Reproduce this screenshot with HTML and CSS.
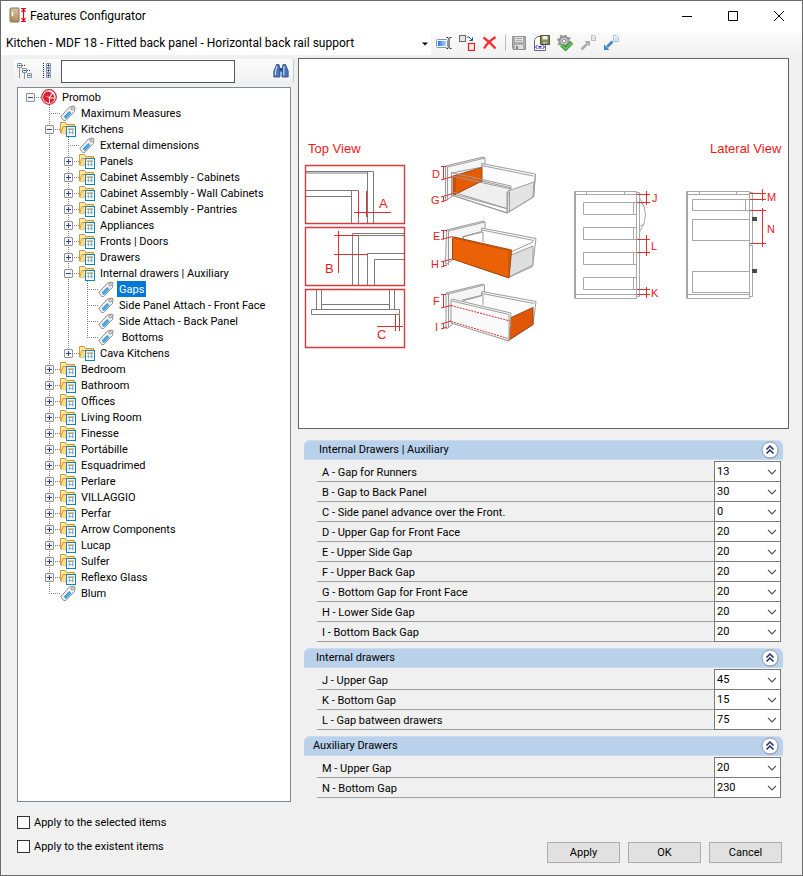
FILE: index.html
```html
<!DOCTYPE html>
<html lang="en">
<head>
<meta charset="utf-8">
<title>Features Configurator</title>
<link rel="stylesheet" href="styles.css">
</head>
<body>
<svg class="defs" aria-hidden="true">
  <defs>
    <linearGradient id="gold" x1="0" y1="0" x2="1" y2="1"><stop offset="0" stop-color="#fff3b4"/><stop offset="1" stop-color="#f3c553"/></linearGradient>
    <linearGradient id="blue" x1="0" y1="0" x2="1" y2="0"><stop offset="0" stop-color="#2f74dc"/><stop offset="1" stop-color="#b4d2fa"/></linearGradient>
    <linearGradient id="wood" x1="0" y1="0" x2="0" y2="1"><stop offset="0" stop-color="#dcc5a2"/><stop offset="1" stop-color="#ad8958"/></linearGradient>
  </defs>
  <symbol id="folder" viewBox="0 0 16 16">
    <path d="M.5 12V1.500H5.500L6.500 3.500H14.500V12z" fill="url(#gold)" stroke="#d4973c"/>
    <path d="M.8 12.200L3 5.500H15" fill="none" stroke="#d4973c"/>
    <path d="M1.500 12l2-5.500H8V12z" fill="#ffe083"/>
    <rect x="6.500" y="5.500" width="9" height="10" fill="#fff" stroke="#1481c2"/>
    <path d="M8 8.500h6M8 11.500h6M9.500 7.500v6M12.500 7.500v6" stroke="#83b6e2" fill="none"/>
    <path d="M8 7.500h6" stroke="#f1c04e"/>
  </symbol>
  <symbol id="tag" viewBox="0 0 16 16">
    <path d="M.8 11.500L9.500 2l4.500-1 1 1-.5 4.500-8.700 9-2 .2z" fill="#f0f0f0" stroke="#8c8c8c"/>
    <path d="M4.200 11.800l5-5.300 1.800 1.800-5 5.200z" fill="#48aee8" stroke="#167fc1" stroke-width=".8"/>
    <circle cx="12.200" cy="3.800" r="1.200" fill="#fff" stroke="#777" stroke-width=".8"/>
  </symbol>
  <symbol id="up" viewBox="0 0 18 18">
    <circle cx="9.500" cy="10" r="8" fill="#7d8da6" opacity=".5"/>
    <circle cx="9" cy="9" r="8" fill="#fff" stroke="#8e99b3"/>
    <path d="M5.500 8.500L9 5l3.500 3.500M5.500 12.500L9 9l3.500 3.500" fill="none" stroke="#1e2d6b" stroke-width="1.500"/>
  </symbol>
  <symbol id="down" viewBox="0 0 10 6"><path d="M1 .8L5 4.800 9 .8" fill="none" stroke="#505050" stroke-width="1.200"/></symbol>
</svg>

<div class="window">
  <header class="titlebar">
    <svg class="app-icon" viewBox="0 0 18 18" aria-hidden="true">
      <rect x="1" y="1" width="9" height="14" rx="1" fill="url(#wood)" stroke="#8a7048"/>
      <path d="M3.500 5v4" stroke="#fff" stroke-width="1.500"/>
      <path d="M12 1.500h5M12 14.500h5M14.500 2v12M12.500 5l2-3 2 3M12.500 11l2 3 2-3" fill="none" stroke="#e2001a" stroke-width="1.200"/>
    </svg>
    <h1>Features Configurator</h1>
    <div class="caption-buttons">
      <button type="button" aria-label="Minimize"><svg viewBox="0 0 12 12"><path d="M1 6.500h10"/></svg></button>
      <button type="button" aria-label="Maximize"><svg viewBox="0 0 12 12"><path d="M1.500 1.500h9v9h-9z"/></svg></button>
      <button type="button" aria-label="Close"><svg viewBox="0 0 12 12"><path d="M1 1l10 10M11 1L1 11"/></svg></button>
    </div>
  </header>

  <div class="toolbar">
    <div class="model">
      <select aria-label="Model"><option>Kitchen - MDF 18 - Fitted back panel - Horizontal back rail support</option></select>
      <svg class="model-arrow" viewBox="0 0 6 4" aria-hidden="true"><path d="M0 .5h6L3 3.500z"/></svg>
    </div>
    <div class="tools">
      <button type="button" aria-label="Rename"><svg viewBox="0 0 16 16"><rect x=".5" y="4.500" width="11" height="8" rx="1" fill="#fff" stroke="#8295b5"/><rect x="2" y="6" width="8" height="5" fill="url(#blue)"/><path d="M10.500 2.500h1.500l1 1 1-1H15.500M13 3.500v9M10.500 13.500H12l1-1 1 1h1.500" fill="none" stroke="#222"/></svg></button>
      <button type="button" aria-label="Replace"><svg viewBox="0 0 16 16"><rect x=".5" y=".5" width="6" height="6" fill="#e5e5e5" stroke="#706868"/><path d="M8 2h2l3 3M13.500 2.500v3h-3" fill="none" stroke="#24489b"/><rect x="9.500" y="8.500" width="6" height="7" fill="#eee" stroke="#f01818" stroke-width="1.200"/></svg></button>
      <button type="button" aria-label="Delete"><svg viewBox="0 0 16 16"><path d="M1.500 2.500C5 5 10 9 13.500 13.500M13.500 2C9 5 4.500 9 2 13.500" fill="none" stroke="#f42d2d" stroke-width="2.200"/></svg></button>
      <span class="separator"></span>
      <button type="button" aria-label="Save"><svg viewBox="0 0 16 16"><path d="M1.500 1.500h13v13h-12l-1-1z" fill="#aaa" stroke="#929292"/><path d="M4 2h8v5H4z" fill="#e2e2e2"/><path d="M5 3.500h6M5 5.500h6" stroke="#aaa"/><path d="M4 10h8v4H4z" fill="#ddd"/><path d="M6 11v3" stroke="#888" stroke-width="2"/></svg></button>
      <button type="button" aria-label="Save as code"><svg viewBox="0 0 16 16"><path d="M.5 4.500L3.500 1.500h8v14H.5z" fill="#fff" stroke="#666"/><path d="M6.500.5h9v9h-9z" fill="#8b8650" stroke="#55522f"/><path d="M8.500 1h5v3.500h-5z" fill="#eee"/><path d="M9 6.500h4V9H9z" fill="#aaa"/><path d="M3.500 10L1.500 12l2 2M8.500 10l2 2-2 2M4.500 11.500h3M4.500 13h3" fill="none" stroke="#1717ee"/></svg></button>
      <button type="button" aria-label="Validate"><svg viewBox="0 0 16 16"><circle cx="7" cy="6" r="4.500" fill="#ccc" stroke="#929292" stroke-width="2"/><circle cx="7" cy="6" r="6" fill="none" stroke="#929292" stroke-width="2" stroke-dasharray="2 2.700"/><circle cx="7" cy="6" r="1.800" fill="#fff" stroke="#929292"/><path d="M4.500 10l4 4L15 7.500" fill="none" stroke="#28822b" stroke-width="3.500"/><path d="M4.500 10l4 4L15 7.500" fill="none" stroke="#60cf57" stroke-width="1.800"/></svg></button>
      <button type="button" aria-label="Export"><svg viewBox="0 0 16 16"><path d="M11.500.5h2.500l1.500 1.500v3.500h-4z" fill="#eee" stroke="#bbb"/><path d="M12.500 3.500h2" stroke="#bbb" stroke-width=".7"/><path d="M1.500 14.500L7 9" stroke="#aaa" stroke-width="2.600"/><path d="M4.500 6H10v5.500z" fill="#aaa"/></svg></button>
      <button type="button" aria-label="Import"><svg viewBox="0 0 16 16"><path d="M10.500.5h3l2 2v4h-5z" fill="#eef5ff" stroke="#a7bfdf"/><path d="M12 3.500h2M12 5h2" stroke="#8eafda" stroke-width=".7"/><path d="M4 12l5.500-5.500" stroke="#3c86cf" stroke-width="2.600"/><path d="M1 9.500V15h5.500z" fill="#3c86cf"/></svg></button>
    </div>
  </div>

  <main class="main">
    <section class="left">
      <div class="search">
        <button type="button" aria-label="Collapse all"><svg viewBox="0 0 16 16"><g fill="#fff" stroke="#7793b8"><path d="M.5.5h4v4h-4zM5.500 5.500h4v4h-4zM10.500 10.500h4v4h-4z"/></g><path d="M1.500 2.500h2M6.500 7.500h2M11.500 12.500h2" stroke="#333"/><path d="M2.500 5.500v10M5 2.500h4M7.500 10.500v5M10 7.500h4" stroke="#333" stroke-dasharray="1 1"/></svg></button>
        <button type="button" aria-label="Expand all"><svg viewBox="0 0 16 16"><g fill="#fff" stroke="#7793b8"><path d="M7.500.5h4v4h-4zM7.500 5.500h4v4h-4zM7.500 10.500h4v4h-4z"/></g><path d="M8.500 2.500h2M8.500 7.500h2M8.500 12.500h2M9.500 1.500v2M9.500 6.500v2M9.500 11.500v2" stroke="#111"/><path d="M4.500 0v16" stroke="#222" stroke-dasharray="1 1"/></svg></button>
        <input type="text" aria-label="Search features">
        <button type="button" class="find" aria-label="Find"><svg viewBox="0 0 16 16"><path d="M3.500 1.500h2.500l1 4.500v8H.800V8zM10 1.500h2.500L15.200 8v6H9V6z" fill="#4a72b5" stroke="#2b4d8c" stroke-width=".8"/><path d="M4 3L2.500 8.500v4M11 3l-.2 5.500v4" fill="none" stroke="#c4d8f4" stroke-width="1.200"/><path d="M6.500 5h3v3.500h-3z" fill="#2b4d8c"/></svg></button>
      </div>

      <nav class="tree" aria-label="Features">
        <ul>
          <li><div class="row"><button type="button" class="exp open" aria-label="Collapse"></button><svg viewBox="0 0 16 16"><circle cx="8" cy="8" r="7.300" fill="#fff" stroke="#d32735" stroke-width="1.200"/><path d="M7.500 2.500a5.600 5.600 0 0 0-2.500 10.500l3 1V9L4 6.500l4 1.500 3-4zM12 4.500L9 8.500h4.500zM9 9.500V14c2.500-.5 4.300-2.200 4.500-4.500z" fill="#dc1f31"/></svg><span>Promob</span></div>
            <ul>
              <li><div class="row leaf"><i></i><svg><use href="#tag"/></svg><span>Maximum Measures</span></div></li>
              <li><div class="row"><button type="button" class="exp open" aria-label="Collapse"></button><svg><use href="#folder"/></svg><span>Kitchens</span></div>
                <ul>
                  <li><div class="row leaf"><i></i><svg><use href="#tag"/></svg><span>External dimensions</span></div></li>
                  <li><div class="row"><button type="button" class="exp" aria-label="Expand"></button><svg><use href="#folder"/></svg><span>Panels</span></div></li>
                  <li><div class="row"><button type="button" class="exp" aria-label="Expand"></button><svg><use href="#folder"/></svg><span>Cabinet Assembly - Cabinets</span></div></li>
                  <li><div class="row"><button type="button" class="exp" aria-label="Expand"></button><svg><use href="#folder"/></svg><span>Cabinet Assembly - Wall Cabinets</span></div></li>
                  <li><div class="row"><button type="button" class="exp" aria-label="Expand"></button><svg><use href="#folder"/></svg><span>Cabinet Assembly - Pantries</span></div></li>
                  <li><div class="row"><button type="button" class="exp" aria-label="Expand"></button><svg><use href="#folder"/></svg><span>Appliances</span></div></li>
                  <li><div class="row"><button type="button" class="exp" aria-label="Expand"></button><svg><use href="#folder"/></svg><span>Fronts | Doors</span></div></li>
                  <li><div class="row"><button type="button" class="exp" aria-label="Expand"></button><svg><use href="#folder"/></svg><span>Drawers</span></div></li>
                  <li><div class="row"><button type="button" class="exp open" aria-label="Collapse"></button><svg><use href="#folder"/></svg><span>Internal drawers | Auxiliary</span></div>
                    <ul>
                      <li><div class="row leaf"><i></i><svg><use href="#tag"/></svg><span class="selected">Gaps</span></div></li>
                      <li><div class="row leaf"><i></i><svg><use href="#tag"/></svg><span>Side Panel Attach - Front Face</span></div></li>
                      <li><div class="row leaf"><i></i><svg><use href="#tag"/></svg><span>Side Attach - Back Panel</span></div></li>
                      <li><div class="row leaf"><i></i><svg><use href="#tag"/></svg><span>&nbsp;Bottoms</span></div></li>
                    </ul>
                  </li>
                  <li><div class="row"><button type="button" class="exp" aria-label="Expand"></button><svg><use href="#folder"/></svg><span>Cava Kitchens</span></div></li>
                </ul>
              </li>
              <li><div class="row"><button type="button" class="exp" aria-label="Expand"></button><svg><use href="#folder"/></svg><span>Bedroom</span></div></li>
              <li><div class="row"><button type="button" class="exp" aria-label="Expand"></button><svg><use href="#folder"/></svg><span>Bathroom</span></div></li>
              <li><div class="row"><button type="button" class="exp" aria-label="Expand"></button><svg><use href="#folder"/></svg><span>Offices</span></div></li>
              <li><div class="row"><button type="button" class="exp" aria-label="Expand"></button><svg><use href="#folder"/></svg><span>Living Room</span></div></li>
              <li><div class="row"><button type="button" class="exp" aria-label="Expand"></button><svg><use href="#folder"/></svg><span>Finesse</span></div></li>
              <li><div class="row"><button type="button" class="exp" aria-label="Expand"></button><svg><use href="#folder"/></svg><span>Portábille</span></div></li>
              <li><div class="row"><button type="button" class="exp" aria-label="Expand"></button><svg><use href="#folder"/></svg><span>Esquadrimed</span></div></li>
              <li><div class="row"><button type="button" class="exp" aria-label="Expand"></button><svg><use href="#folder"/></svg><span>Perlare</span></div></li>
              <li><div class="row"><button type="button" class="exp" aria-label="Expand"></button><svg><use href="#folder"/></svg><span>VILLAGGIO</span></div></li>
              <li><div class="row"><button type="button" class="exp" aria-label="Expand"></button><svg><use href="#folder"/></svg><span>Perfar</span></div></li>
              <li><div class="row"><button type="button" class="exp" aria-label="Expand"></button><svg><use href="#folder"/></svg><span>Arrow Components</span></div></li>
              <li><div class="row"><button type="button" class="exp" aria-label="Expand"></button><svg><use href="#folder"/></svg><span>Lucap</span></div></li>
              <li><div class="row"><button type="button" class="exp" aria-label="Expand"></button><svg><use href="#folder"/></svg><span>Sulfer</span></div></li>
              <li><div class="row"><button type="button" class="exp" aria-label="Expand"></button><svg><use href="#folder"/></svg><span>Reflexo Glass</span></div></li>
              <li><div class="row leaf"><i></i><svg><use href="#tag"/></svg><span>Blum</span></div></li>
            </ul>
          </li>
        </ul>
      </nav>
    </section>

    <section class="right">
      <div class="preview">
        <svg class="diagram" viewBox="299 59 489 369" role="img" aria-label="Drawer gap diagram">
          <g class="title"><text x="308" y="153">Top View</text><text x="710" y="153">Lateral View</text></g>

          <!-- top views -->
          <g class="ink">
            <path d="M306 171.500h67.500V223M306 173h61M367.500 171v52M306 190.500h52.500V223M306 196.500h46M351.500 190.500V223"/>
            <path d="M352.500 285v-51.500H404M358.500 235.500V285M352.500 235.500H404M367.500 285v-31.500H404M374.500 285v-25.500H404"/>
            <path d="M316.500 290v19M321.500 290v19M389.500 290v19M394.500 290v19M321.500 304.500h68M311.500 309.500h88v5h-88z"/>
          </g>
          <g class="frame"><path d="M305.500 165.500h99v58h-99zM305.500 227.500h99v58h-99zM305.500 289.500h99v58h-99z"/></g>
          <g class="mark"><path d="M358.500 191v26M366.500 191v26M354 212.500h37M334 235.500h24M334 254.500h34M338.500 231v42M395.500 315v16M399.500 315v16M377 326.500h26"/></g>
          <g class="big"><text x="379" y="208">A</text><text x="325" y="273">B</text><text x="377" y="339">C</text></g>

          <!-- drawer with highlighted side -->
          <g class="solid">
            <path d="M445.500 166L483 157l2 1v14l-38 28h-1.500z" fill="#f5f5f5"/>
            <path d="M445.500 166l2 1 37.500-9M447.500 167v33"/>
            <path d="M481.500 163.500l54 10.500-2 23-26 16-56-18v-22l31-6z" fill="#fcfcfc"/>
            <path d="M453 194l29-13 28 6.500v22z" fill="#efefef"/>
            <path d="M481.500 165.500l52 10.500"/>
            <path d="M453 176l29-8.500V181l-27 13.500-2-.5z" fill="#e65c05" stroke="#a54510"/>
            <path d="M455 175.500v19" stroke="#a54510"/>
            <path d="M451 172.500l60 13.500v3L452 176M453 192l55 17M451 195l56 18"/>
            <path d="M508 191l26-9-1 15-26 16z" fill="#e4e4e4"/>
            <path d="M507 192h2.500v20M507 192v21M535.500 174l-2 23"/>
          </g>
          <!-- drawer with highlighted front -->
          <g class="solid">
            <path d="M446.500 230l37-9 1.500 1v14l-38 28h-1.500z" fill="#f5f5f5"/>
            <path d="M446 231h2l37-9M448.500 231v34"/>
            <path d="M481.500 228l54.500 10.500-3.500 28-24 11-45-15v-26l18-5z" fill="#fcfcfc"/>
            <path d="M482 230l52 10.500M462 237l21-5v10"/>
            <path d="M511 255l22-9v19l-24 12z" fill="#dedede"/>
            <path d="M511 252l22-10"/>
            <path d="M452.500 238l1.500-1 57.500 13-2.500 28-56.500-19z" fill="#ea6205" stroke="#9b4815"/>
            <path d="M454 238l55 12.500v26" stroke="#bd500b"/>
          </g>
          <!-- drawer with highlighted back -->
          <g class="solid">
            <path d="M446 293l37-9 1.500 1v14l-38 30H446z" fill="#f5f5f5"/>
            <path d="M446 294h2l36-9M448.500 294v34"/>
            <path d="M482 291.500l54 10-3 23-25 16.500-45-16v-24l18-5z" fill="#fcfcfc"/>
            <path d="M482 293.500l52 10M462 300l21-5v10"/>
            <path d="M510 318l23-10.500v17L509 340z" fill="#de5606" stroke="#9b4815"/>
            <path d="M451 300l1-1 59 14-2 28-58-18z" fill="#fafafa"/>
            <path d="M452 301l57 13.500v26"/>
          </g>
          <path class="dots" d="M451 305.500l59 15.500M451 321.500l57 17"/>
          <g class="mark">
            <path d="M443.500 166v14M441 166.500h5M441 180l12-3.500M443.500 196v6M441 197l12-3.500M441 202l6-2"/>
            <path d="M443.500 230.500v9M441 230.500h6M441 239.500l12-3M443.500 261v6M441 262l11-3M441 267l6-2"/>
            <path d="M443.500 294v14M441 294.500h5M441 308l10-2.500M443.500 323v6M441 324l10-3M441 329l6-2"/>
          </g>
          <g class="small"><text x="432" y="178">D</text><text x="431" y="204">G</text><text x="433" y="240">E</text><text x="431" y="268">H</text><text x="433" y="305">F</text><text x="435" y="331">I</text></g>

          <!-- cabinets seen from the side -->
          <g class="thin">
            <path d="M574.500 191.500h62v107h-62zM575.500 192v106M574.500 194.500h62M586.500 191.500v3M624.500 191.500v3M574.500 294.500h62M636.500 192.500h3v104h-3z"/>
            <path d="M583.500 202.500h53v12h-53zM583.500 227.500h53v12h-53zM583.500 252.500h53v12h-53zM583.500 277.500h53v12h-53zM633.500 202.500v12M633.500 227.500v12M633.500 252.500v12M633.500 277.500v12"/>
            <path d="M639.500 198q6 8 6 17t-6 17M639.500 202q3 1 5 5M639.500 226q2 0 4-2"/>
            <path d="M686.500 191.500h63v107h-63zM687.500 192v106M686.500 194.500h63M699.500 191.500v3M736.500 191.500v3M686.500 294.500h63M749.500 192.500h3v51h-3zM749.500 245.500h3v51h-3z"/>
            <path d="M692.500 199.500h57v11h-57zM745.500 199.500v11M692.500 219.500h57v21h-57zM692.500 271.500h57v21h-57z"/>
          </g>
          <path d="M752 217h5v4h-5zM752 269h5v4h-5z" fill="#4a4a4a"/>
          <g class="mark">
            <path d="M637 194.500h13M637 202.500h13M646.500 191v14M637 239.500h13M637 252.500h13M646.500 235v21M637 289.500h13M637 294.500h13M646.500 287v11"/>
            <path d="M750 193.500h16M750 199.500h16M762.500 189v12M750 210.500h16M750 243.500h16M762.500 208v39"/>
          </g>
          <g class="small"><text x="652" y="202">J</text><text x="651" y="250">L</text><text x="651" y="297">K</text><text x="767" y="201">M</text><text x="767" y="233">N</text></g>
        </svg>
      </div>

      <div class="groups">
        <section class="group">
          <header class="wide"><h2>Internal Drawers | Auxiliary</h2><button type="button" aria-label="Collapse group"><svg><use href="#up"/></svg></button></header>
          <div class="fields">
            <div class="field"><label for="fa">A - Gap for Runners</label><div class="combo"><select id="fa"><option>13</option></select><svg><use href="#down"/></svg></div></div>
            <div class="field"><label for="fb">B - Gap to Back Panel</label><div class="combo"><select id="fb"><option>30</option></select><svg><use href="#down"/></svg></div></div>
            <div class="field"><label for="fc">C - Side panel advance over the Front.</label><div class="combo"><select id="fc"><option>0</option></select><svg><use href="#down"/></svg></div></div>
            <div class="field"><label for="fd">D - Upper Gap for Front Face</label><div class="combo"><select id="fd"><option>20</option></select><svg><use href="#down"/></svg></div></div>
            <div class="field"><label for="fe">E - Upper Side Gap</label><div class="combo"><select id="fe"><option>20</option></select><svg><use href="#down"/></svg></div></div>
            <div class="field"><label for="ff">F - Upper Back Gap</label><div class="combo"><select id="ff"><option>20</option></select><svg><use href="#down"/></svg></div></div>
            <div class="field"><label for="fg">G - Bottom Gap for Front Face</label><div class="combo"><select id="fg"><option>20</option></select><svg><use href="#down"/></svg></div></div>
            <div class="field"><label for="fh">H - Lower Side Gap</label><div class="combo"><select id="fh"><option>20</option></select><svg><use href="#down"/></svg></div></div>
            <div class="field"><label for="fi">I - Bottom Back Gap</label><div class="combo"><select id="fi"><option>20</option></select><svg><use href="#down"/></svg></div></div>
          </div>
        </section>
        <section class="group">
          <header class="medium"><h2>Internal drawers</h2><button type="button" aria-label="Collapse group"><svg><use href="#up"/></svg></button></header>
          <div class="fields">
            <div class="field"><label for="fj">J - Upper Gap</label><div class="combo"><select id="fj"><option>45</option></select><svg><use href="#down"/></svg></div></div>
            <div class="field"><label for="fk">K - Bottom Gap</label><div class="combo"><select id="fk"><option>15</option></select><svg><use href="#down"/></svg></div></div>
            <div class="field"><label for="fl">L - Gap batween drawers</label><div class="combo"><select id="fl"><option>75</option></select><svg><use href="#down"/></svg></div></div>
          </div>
        </section>
        <section class="group">
          <header><h2>Auxiliary Drawers</h2><button type="button" aria-label="Collapse group"><svg><use href="#up"/></svg></button></header>
          <div class="fields">
            <div class="field"><label for="fm">M - Upper Gap</label><div class="combo"><select id="fm"><option>20</option></select><svg><use href="#down"/></svg></div></div>
            <div class="field"><label for="fn">N - Bottom Gap</label><div class="combo"><select id="fn"><option>230</option></select><svg><use href="#down"/></svg></div></div>
          </div>
        </section>
      </div>
    </section>
  </main>

  <footer class="footer">
    <div class="checks">
      <label><input type="checkbox">Apply to the selected items</label>
      <label><input type="checkbox">Apply to the existent items</label>
    </div>
    <div class="actions">
      <button type="button">Apply</button>
      <button type="button">OK</button>
      <button type="button">Cancel</button>
    </div>
  </footer>
</div>
</body>
</html>
```
FILE: styles.css
```css
* { box-sizing: border-box; }

body {
  margin: 0;
  background: #f0f0f0;
  color: #000;
  font: 11px/16px Roboto, "Liberation Sans", sans-serif;
}

button, input, select { font: inherit; color: inherit; margin: 0; padding: 0; border: 0; border-radius: 0; background: none; }
svg { display: block; flex: none; }
ul { list-style: none; margin: 0; padding: 0; }
h1, h2 { margin: 0; font-size: inherit; font-weight: normal; }
.defs { position: absolute; width: 0; height: 0; }

.window {
  display: flex;
  flex-direction: column;
  min-height: 100vh;
  border: 1px solid #6a6a6a;
}

/* title bar */
.titlebar { display: flex; align-items: center; height: 30px; padding-left: 8px; background: #fff; }
.app-icon { width: 18px; height: 18px; margin-right: 3px; }
.titlebar h1 { flex: 1; font-size: 12px; }
.caption-buttons { display: flex; }
.caption-buttons button { width: 46px; height: 30px; display: grid; place-items: center; }
.caption-buttons svg { width: 12px; height: 12px; fill: none; stroke: #000; }

/* toolbar */
.toolbar { display: flex; height: 27px; background: linear-gradient(#fcfcfc, #f0f0f0); }
.model { position: relative; flex: 0 1 431px; height: 24px; background: #fff; border-right: 1px solid #f6f6f6; }
.model select { appearance: none; width: 100%; height: 25px; padding-left: 5px; font-size: 12px; line-height: 25px; }
.model-arrow { position: absolute; right: 3px; top: 11px; width: 6px; height: 4px; }
.tools { display: flex; align-items: center; height: 24px; }
.tools button { display: grid; place-items: center; width: 23px; height: 22px; }
.tools svg { width: 16px; height: 16px; }
.separator { width: 1px; height: 16px; margin: 0 1px 0 4px; background: #bdbdbd; }

/* two columns */
.main { flex: 1; display: grid; grid-template-columns: minmax(200px, 274px) minmax(0, 1fr); column-gap: 7px; padding: 0 13px 0 16px; }
.left { display: flex; flex-direction: column; gap: 4px; padding-top: 1px; }
.search { display: flex; align-items: center; height: 24px; margin: 0 -3px; padding: 0 4px 0 3px; border-right: 1px solid #c8c8c8; border-radius: 3px; background: linear-gradient(#fcfcfc, #f0f0f0); }
.search svg { width: 16px; height: 16px; }
.search button + button { margin-left: 6px; }
.search input { flex: 0 1 174px; min-width: 0; height: 23px; margin-left: 6px; padding: 0 4px; border: 1px solid #555; background: #fff; }
.search .find { margin-left: auto; }

/* tree */
.tree { flex: 1; padding: 1px 0 1px 3px; border: 1px solid #828790; background: #fff; }
.tree ul ul { padding-left: 19px; }
.tree li { position: relative; }
.tree ul ul > li::before {
  content: "";
  position: absolute;
  left: 9px;
  top: 0;
  bottom: 0;
  width: 1px;
  background: repeating-linear-gradient(#808080 0 1px, transparent 1px 2px);
}
.tree ul ul > li:last-child::before { bottom: auto; height: 9px; }
.row { position: relative; display: flex; align-items: center; height: 16px; white-space: nowrap; }
.row::before {
  content: "";
  position: absolute;
  left: 9px;
  top: 8px;
  width: 11px;
  height: 1px;
  background: repeating-linear-gradient(90deg, #808080 0 1px, transparent 1px 2px);
}
.row > i { width: 19px; }
.row > svg { position: relative; width: 16px; height: 16px; margin: 0 3px 0 1px; }
.row > span { padding: 2px 2px 0; line-height: 14px; }
.row > .selected { background: #0078d7; color: #fff; }
.exp {
  position: relative;
  width: 9px;
  height: 9px;
  margin: 1px 5px 0;
  border: 1px solid #919191;
  border-radius: 1px;
  background:
    linear-gradient(#2b4a94, #2b4a94) center / 5px 1px no-repeat,
    linear-gradient(#2b4a94, #2b4a94) center / 1px 5px no-repeat,
    #f4f4f4;
}
.exp.open { background: linear-gradient(#2b4a94, #2b4a94) center / 5px 1px no-repeat, #f4f4f4; }

/* preview */
.preview { border: 1px solid #646464; background: #fff; }
.diagram { width: 100%; height: auto; font-family: "Liberation Sans", Arial, sans-serif; }
.diagram text { fill: #f01818; }
.title, .big { font-size: 13px; }
.small { font-size: 11px; }
.ink { fill: none; stroke: #7c7c7c; stroke-width: 1; }
.thin { fill: none; stroke: #a8a8a8; }
.frame { fill: none; stroke: #d23c3c; stroke-width: 1.4; }
.mark { fill: none; stroke: #e03030; }
.solid { fill: none; stroke: #9c9c9c; stroke-width: 1; stroke-linejoin: round; }
.dots { fill: none; stroke: #e03030; stroke-dasharray: 2 1; }

/* property groups */
.groups { display: grid; gap: 6px; padding: 11px 6px 4px; }
.group { display: grid; gap: 2px; }
.group header { display: flex; align-items: center; justify-content: space-between; height: 20px; padding: 0 4px 0 9px; border: 1px solid #cbdcf0; border-width: 1px 0; border-radius: 6px 6px 0 0; background: #b9d1ea; }
.group .medium { padding-left: 12px; }
.group .wide { padding-left: 15px; }
.group header svg { width: 18px; height: 18px; }
.fields { padding: 0 2px 0 13px; }
.field { display: flex; height: 20px; border-bottom: 1px solid #a0a0a0; }
.field label { flex: 1; padding-left: 5px; line-height: 22px; }
.combo { position: relative; width: 67px; height: 21px; margin-top: -1px; border: 1px solid #7a7a7a; background: #fff; }
.combo select { display: block; appearance: none; width: 100%; height: 19px; padding-left: 2px; line-height: 19px; }
.combo svg { position: absolute; right: 3px; top: 7px; width: 10px; height: 6px; pointer-events: none; }

/* footer */
.footer { display: flex; justify-content: space-between; align-items: flex-start; padding: 14px 20px 12px 16px; }
.checks { display: grid; gap: 11px; }
.checks label { display: flex; align-items: center; gap: 4px; height: 13px; }
.checks input { appearance: none; width: 13px; height: 13px; border: 1px solid #333; background: #fff; }
.actions { display: flex; gap: 8px; margin-top: 26px; }
.actions button { width: 73px; height: 21px; border: 1px solid #adadad; background: #e1e1e1; }
```
